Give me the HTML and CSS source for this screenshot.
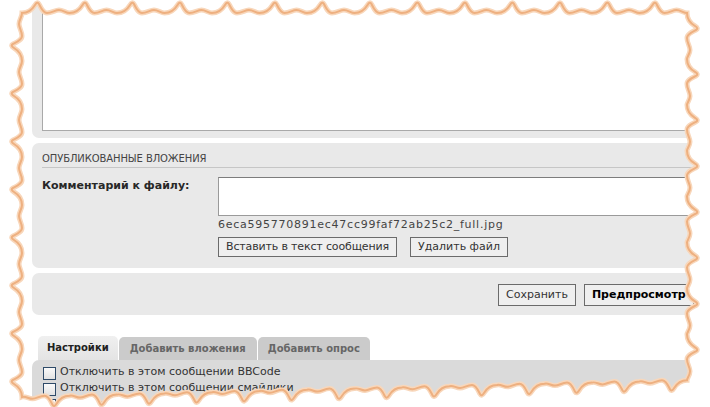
FILE: index.html
```html
<!DOCTYPE html>
<html lang="ru">
<head>
    <meta charset="UTF-8">
    <meta name="viewport" content="width=device-width, initial-scale=1.0">
    <title>Ответить</title>
    <link rel="stylesheet" href="styles.css">
</head>
<body>
    <div class="page">
        <div class="panel message-box">
            <textarea class="message" name="message"></textarea>
        </div>

        <div class="panel attach">
            <h3>Опубликованные вложения</h3>
            <div class="attach-row">
                <label class="attach-label" for="comment">Комментарий к файлу:</label>
                <div class="attach-file">
                    <textarea id="comment" class="comment" name="comment"></textarea>
                    <div class="file-name">6eca595770891ec47cc99faf72ab25c2_full.jpg</div>
                    <div class="file-buttons">
                        <button type="button" class="insert">Вставить в текст сообщения</button>
                        <button type="button">Удалить файл</button>
                    </div>
                </div>
            </div>
        </div>

        <div class="panel submit-row">
            <button type="submit">Сохранить</button>
            <button type="submit" class="primary">Предпросмотр</button>
            <button type="submit">Отправить</button>
        </div>

        <ul class="tabs">
            <li class="active">Настройки</li>
            <li class="wide">Добавить вложения</li>
            <li>Добавить опрос</li>
        </ul>
        <div class="panel options">
            <label><input type="checkbox"> Отключить в этом сообщении BBCode</label>
            <label><input type="checkbox"> Отключить в этом сообщении смайлики</label>
            <label><input type="checkbox"> Не преобразовывать адреса URL в ссылки</label>
        </div>
    </div>

    <!-- torn paper edge over the screenshot -->
    <svg class="torn" viewBox="0 0 710 407">
        <defs>
            <path id="edge" d="M22,13
                c6,0 10,-3 13,-8 c1.5,-2.5 3,-3 4,-1 c2,4 4,9 8,9 c5,0 8,-3 12,-3 c4,0 7,3 10.5,3
                c6,0 10,-3 13,-8 c1.5,-2.5 3,-3 4,-1 c2,4 4,9 8,9 c5,0 8,-3 12,-3 c4,0 7,3 10.5,3
                c6,0 10,-3 13,-8 c1.5,-2.5 3,-3 4,-1 c2,4 4,9 8,9 c5,0 8,-3 12,-3 c4,0 7,3 10.5,3
                c6,0 10,-3 13,-8 c1.5,-2.5 3,-3 4,-1 c2,4 4,9 8,9 c5,0 8,-3 12,-3 c4,0 7,3 10.5,3
                c6,0 10,-3 13,-8 c1.5,-2.5 3,-3 4,-1 c2,4 4,9 8,9 c5,0 8,-3 12,-3 c4,0 7,3 10.5,3
                c6,0 10,-3 13,-8 c1.5,-2.5 3,-3 4,-1 c2,4 4,9 8,9 c5,0 8,-3 12,-3 c4,0 7,3 10.5,3
                c6,0 10,-3 13,-8 c1.5,-2.5 3,-3 4,-1 c2,4 4,9 8,9 c5,0 8,-3 12,-3 c4,0 7,3 10.5,3
                c6,0 10,-3 13,-8 c1.5,-2.5 3,-3 4,-1 c2,4 4,9 8,9 c5,0 8,-3 12,-3 c4,0 7,3 10.5,3
                c6,0 10,-3 13,-8 c1.5,-2.5 3,-3 4,-1 c2,4 4,9 8,9 c5,0 8,-3 12,-3 c4,0 7,3 10.5,3
                c6,0 10,-3 13,-8 c1.5,-2.5 3,-3 4,-1 c2,4 4,9 8,9 c5,0 8,-3 12,-3 c4,0 7,3 10.5,3
                c6,0 10,-3 13,-8 c1.5,-2.5 3,-3 4,-1 c2,4 4,9 8,9 c5,0 8,-3 12,-3 c4,0 7,3 10.5,3
                c6,0 10,-3 13,-8 c1.5,-2.5 3,-3 4,-1 c2,4 4,9 8,9 c5,0 8,-3 12,-3 c4,0 7,3 10.5,3
                c6,0 10,-3 13,-8 c1.5,-2.5 3,-3 4,-1 c2,4 4,9 8,9 c5,0 8,-3 12,-3 c4,0 7,3 10.5,3
                c6,0 10,-3 13,-8 c1.5,-2.5 3,-3 4,-1 c2,4 4,9 8,9 c5,0 8,-3 12,-3 c4,0 7,3 10.5,3
                c0,6 3,10 8,13 c2.5,1.5 3,3 1,4 c-4,2 -9,4 -9,8 c0,5 3,8 3,12 c0,4 -3,7 -3,8.9
                c0,6 3,10 8,13 c2.5,1.5 3,3 1,4 c-4,2 -9,4 -9,8 c0,5 3,8 3,12 c0,4 -3,7 -3,8.9
                c0,6 3,10 8,13 c2.5,1.5 3,3 1,4 c-4,2 -9,4 -9,8 c0,5 3,8 3,12 c0,4 -3,7 -3,8.9
                c0,6 3,10 8,13 c2.5,1.5 3,3 1,4 c-4,2 -9,4 -9,8 c0,5 3,8 3,12 c0,4 -3,7 -3,8.9
                c0,6 3,10 8,13 c2.5,1.5 3,3 1,4 c-4,2 -9,4 -9,8 c0,5 3,8 3,12 c0,4 -3,7 -3,8.9
                c0,6 3,10 8,13 c2.5,1.5 3,3 1,4 c-4,2 -9,4 -9,8 c0,5 3,8 3,12 c0,4 -3,7 -3,8.9
                c0,6 3,10 8,13 c2.5,1.5 3,3 1,4 c-4,2 -9,4 -9,8 c0,5 3,8 3,12 c0,4 -3,7 -3,8.9
                c0,6 3,10 8,13 c2.5,1.5 3,3 1,4 c-4,2 -9,4 -9,8 c0,5 3,8 3,12 c0,4 -3,7 -3,8.9
                c-6,0 -10,3 -13,8 c-1.5,2.5 -3,3 -4,1 c-2,-4 -4,-9 -8,-9 c-5,0 -8,3 -12,3 c-4,0 -7,-3 -10.5,-1.8
                c-6,0 -10,3 -13,8 c-1.5,2.5 -3,3 -4,1 c-2,-4 -4,-9 -8,-9 c-5,0 -8,3 -12,3 c-4,0 -7,-3 -10.5,-1.8
                c-6,0 -10,3 -13,8 c-1.5,2.5 -3,3 -4,1 c-2,-4 -4,-9 -8,-9 c-5,0 -8,3 -12,3 c-4,0 -7,-3 -10.5,-1.8
                c-6,0 -10,3 -13,8 c-1.5,2.5 -3,3 -4,1 c-2,-4 -4,-9 -8,-9 c-5,0 -8,3 -12,3 c-4,0 -7,-3 -10.5,-1.8
                c-6,0 -10,3 -13,8 c-1.5,2.5 -3,3 -4,1 c-2,-4 -4,-9 -8,-9 c-5,0 -8,3 -12,3 c-4,0 -7,-3 -10.5,-1.8
                c-6,0 -10,3 -13,8 c-1.5,2.5 -3,3 -4,1 c-2,-4 -4,-9 -8,-9 c-5,0 -8,3 -12,3 c-4,0 -7,-3 -10.5,-1.8
                c-6,0 -10,3 -13,8 c-1.5,2.5 -3,3 -4,1 c-2,-4 -4,-9 -8,-9 c-5,0 -8,3 -12,3 c-4,0 -7,-3 -10.5,-1.8
                c-6,0 -10,3 -13,8 c-1.5,2.5 -3,3 -4,1 c-2,-4 -4,-9 -8,-9 c-5,0 -8,3 -12,3 c-4,0 -7,-3 -10.5,-1.8
                c-6,0 -10,3 -13,8 c-1.5,2.5 -3,3 -4,1 c-2,-4 -4,-9 -8,-9 c-5,0 -8,3 -12,3 c-4,0 -7,-3 -10.5,-1.8
                c-6,0 -10,3 -13,8 c-1.5,2.5 -3,3 -4,1 c-2,-4 -4,-9 -8,-9 c-5,0 -8,3 -12,3 c-4,0 -7,-3 -10.5,-1.8
                c-6,0 -10,3 -13,8 c-1.5,2.5 -3,3 -4,1 c-2,-4 -4,-9 -8,-9 c-5,0 -8,3 -12,3 c-4,0 -7,-3 -10.5,-1.8
                c-6,0 -10,3 -13,8 c-1.5,2.5 -3,3 -4,1 c-2,-4 -4,-9 -8,-9 c-5,0 -8,3 -12,3 c-4,0 -7,-3 -10.5,-1.8
                c-6,0 -10,3 -13,8 c-1.5,2.5 -3,3 -4,1 c-2,-4 -4,-9 -8,-9 c-5,0 -8,3 -12,3 c-4,0 -7,-3 -10.5,-1.8
                c-6,0 -10,3 -13,8 c-1.5,2.5 -3,3 -4,1 c-2,-4 -4,-9 -8,-9 c-5,0 -8,3 -12,3 c-4,0 -7,-3 -10.5,-1.8
                c0,-6 -3,-10 -8,-13 c-2.5,-1.5 -3,-3 -1,-4 c4,-2 9,-4 9,-8 c0,-5 -3,-8 -3,-12 c0,-4 3,-7 3,-11
                c0,-6 -3,-10 -8,-13 c-2.5,-1.5 -3,-3 -1,-4 c4,-2 9,-4 9,-8 c0,-5 -3,-8 -3,-12 c0,-4 3,-7 3,-11
                c0,-6 -3,-10 -8,-13 c-2.5,-1.5 -3,-3 -1,-4 c4,-2 9,-4 9,-8 c0,-5 -3,-8 -3,-12 c0,-4 3,-7 3,-11
                c0,-6 -3,-10 -8,-13 c-2.5,-1.5 -3,-3 -1,-4 c4,-2 9,-4 9,-8 c0,-5 -3,-8 -3,-12 c0,-4 3,-7 3,-11
                c0,-6 -3,-10 -8,-13 c-2.5,-1.5 -3,-3 -1,-4 c4,-2 9,-4 9,-8 c0,-5 -3,-8 -3,-12 c0,-4 3,-7 3,-11
                c0,-6 -3,-10 -8,-13 c-2.5,-1.5 -3,-3 -1,-4 c4,-2 9,-4 9,-8 c0,-5 -3,-8 -3,-12 c0,-4 3,-7 3,-11
                c0,-6 -3,-10 -8,-13 c-2.5,-1.5 -3,-3 -1,-4 c4,-2 9,-4 9,-8 c0,-5 -3,-8 -3,-12 c0,-4 3,-7 3,-11
                c0,-6 -3,-10 -8,-13 c-2.5,-1.5 -3,-3 -1,-4 c4,-2 9,-4 9,-8 c0,-5 -3,-8 -3,-12 c0,-4 3,-7 3,-11 Z"/>
            <mask id="outside">
                <rect x="-20" y="-20" width="750" height="450" fill="#fff"/>
                <use href="#edge" fill="#000"/>
            </mask>
            <filter id="soft" x="-5%" y="-5%" width="110%" height="110%">
                <feGaussianBlur stdDeviation="0.6"/>
            </filter>
        </defs>
        <rect class="torn-fill" x="-20" y="-20" width="750" height="450" mask="url(#outside)"/>
        <use href="#edge" class="torn-glow" filter="url(#soft)"/>
        <use href="#edge" class="torn-line" filter="url(#soft)"/>
    </svg>
</body>
</html>
```

FILE: styles.css
```css
* {
    box-sizing: border-box;
}

body {
    margin: 0;
    width: 710px;
    height: 407px;
    overflow: hidden;
    position: relative;
    background: #fff;
    color: #333;
    font-family: "DejaVu Sans", Verdana, sans-serif;
    font-size: 11px;
}

.page {
    width: 820px;
    margin-left: 32px;
}

.panel {
    background: #e9e9e9;
    border-radius: 7px;
}

/* message textarea (top, cut off) */
.message-box {
    padding: 0 10px 7px;
    border-radius: 0 0 7px 7px;
}

.message {
    display: block;
    width: 100%;
    height: 131px;
    margin: 0;
    border: 1px solid #a9a9a9;
    background: #fff;
    resize: none;
}

/* attachments */
.attach {
    margin-top: 5px;
    padding: 9px 10px 11px;
}

.attach h3 {
    margin: 0;
    padding-bottom: 1px;
    font-size: 10px;
    font-weight: normal;
    line-height: 14px;
    letter-spacing: -0.1px;
    text-transform: uppercase;
    color: #444;
    border-bottom: 1px solid #c6c6c6;
}

.attach-row {
    display: flex;
    margin-top: 9px;
}

.attach-label {
    width: 176px;
    flex-shrink: 0;
    font-weight: bold;
    line-height: 18px;
    color: #282828;
}

.attach-file {
    flex: 1;
}

.comment {
    display: block;
    width: 100%;
    height: 39px;
    margin: 0;
    border: 1px solid #9a9a9a;
    border-top-color: #7d7d7d;
    background: #fff;
    resize: none;
}

.file-name {
    margin-top: 1px;
    line-height: 16px;
    letter-spacing: 0.75px;
    color: #444;
}

.file-buttons {
    display: flex;
    gap: 13px;
    margin-top: 4px;
}

button {
    height: 20px;
    padding: 0 7px;
    border: 1px solid #6b6b6b;
    border-radius: 0;
    background: #efefef;
    color: #333;
    font-family: "DejaVu Sans", Verdana, sans-serif;
    font-size: 11px;
    line-height: 18px;
    white-space: nowrap;
}

.file-buttons .insert {
    letter-spacing: -0.15px;
}

/* submit buttons */
.submit-row {
    display: flex;
    gap: 8px;
    margin-top: 5px;
    padding: 11px 0 9px 466px;
}

.submit-row button {
    height: 22px;
}

.submit-row .primary {
    font-weight: bold;
    color: #000;
}

/* tabs */
.tabs {
    display: flex;
    align-items: flex-end;
    gap: 1px;
    list-style: none;
    margin: 21px 0 0;
    padding: 0 0 0 6px;
}

.tabs li {
    height: 23px;
    padding: 0 10px;
    border-radius: 5px 5px 0 0;
    background: #cbcbcb;
    color: #666;
    font-size: 10px;
    font-weight: bold;
    line-height: 23px;
}

.tabs li.active {
    height: 24px;
    padding: 0 9px;
    line-height: 24px;
    background: linear-gradient(#f0f0f0, #e4e4e4);
    color: #222;
}

.tabs li.wide {
    padding: 0 11px;
}

.options {
    padding: 4px 11px;
    background: #dadada;
    border-radius: 7px 0 0 0;
}

.options label {
    display: flex;
    align-items: flex-start;
    gap: 4px;
    line-height: 16px;
    color: #333;
}

.options input {
    appearance: none;
    width: 13px;
    height: 13px;
    margin: 3px 0 0;
    border: 1px solid #2e4a68;
    background: linear-gradient(#fafafa, #e2e2e2);
}

/* torn paper edge */
.torn {
    position: absolute;
    top: 0;
    left: 0;
    width: 710px;
    height: 407px;
    pointer-events: none;
}

.torn-fill {
    fill: #fff;
}

.torn-glow {
    fill: none;
    stroke: #f8d7bb;
    stroke-width: 5;
}

.torn-line {
    fill: none;
    stroke: #eeb080;
    stroke-width: 2;
}
```
